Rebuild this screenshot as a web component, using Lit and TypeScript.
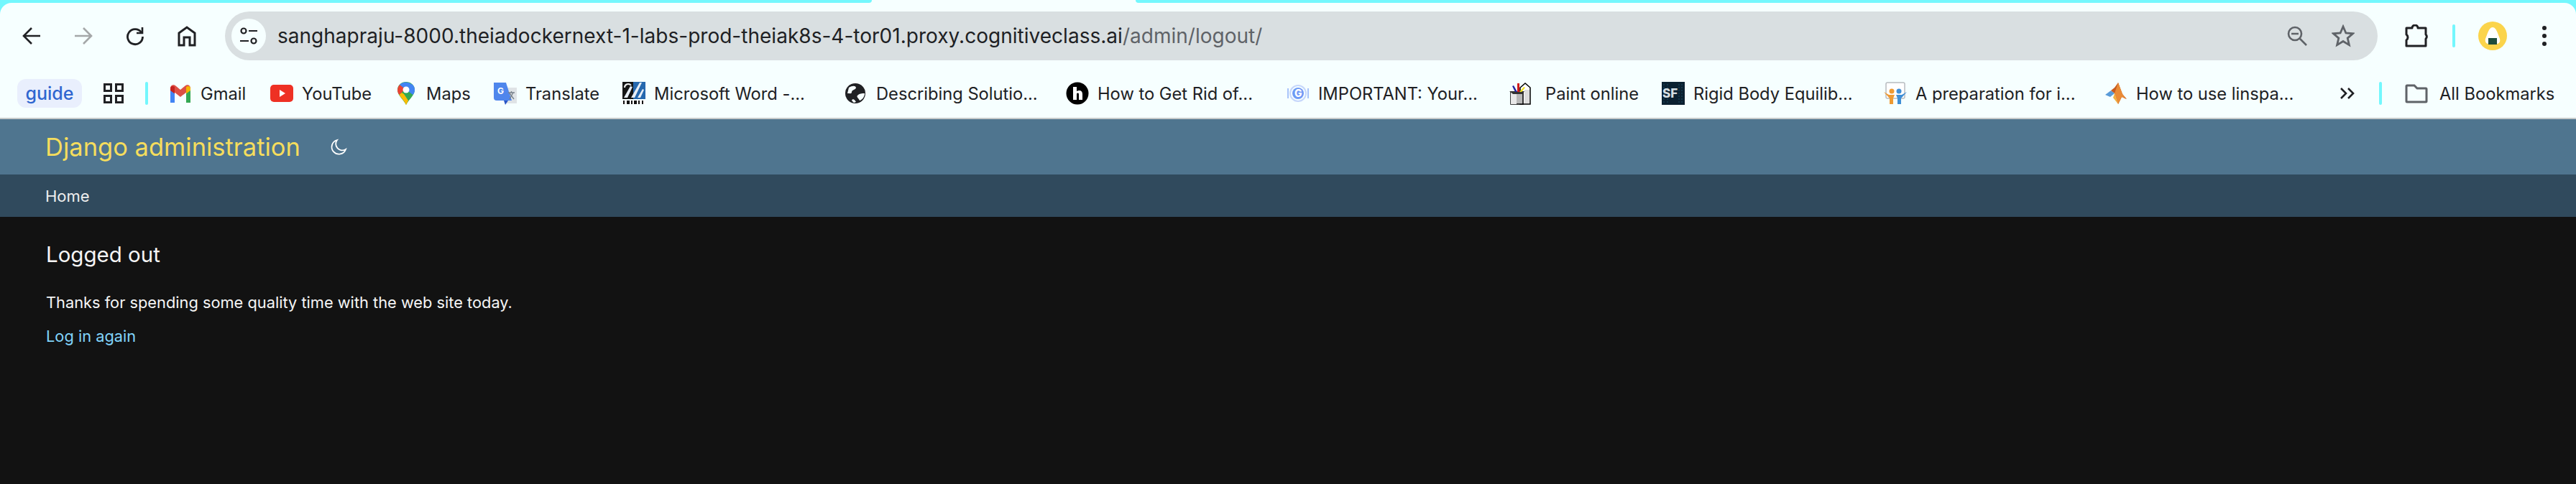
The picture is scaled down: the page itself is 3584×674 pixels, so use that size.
import { LitElement, html, css, svg } from 'lit';
import { customElement } from 'lit/decorators.js';

// favicons, all drawn on a 32x32 box
const icons: Record<string, unknown> = {
  gmail: svg`<path d="M2 10v19h6V15z" fill="#4285f4"/><path d="M24 15v14h6V10z" fill="#34a853"/><path d="M2 10l14 11 14-11v-1c0-5-5-6-8-3l-6 5-6-5C7 3 2 4 2 9z" fill="#dd5044"/><path d="M2 9v3l6 4.500V7C5 5 2 6 2 9z" fill="#c5221f"/><path d="M24 7v9.500l6-4.500V9c0-3-3-4-6-2z" fill="#f4b400"/>`,
  youtube: svg`<rect x="0" y="4" width="32" height="24" rx="5" fill="#ee3124"/><path d="M13 11l8 5-8 5z" fill="#fff"/>`,
  maps: svg`<path d="M16 32C12 24 4 19 4 11a12 11 0 0 1 24 0c0 8-8 13-12 21z" fill="#34a853"/><path d="M7 4a12 11 0 0 0-3 7c0 3 1 5 2.500 7L16 9z" fill="#ea4335"/><path d="M7 4a12 11 0 0 1 17-.5L16 11z" fill="#4285f4"/><path d="M24 3a12 11 0 0 1 4 8c0 3-1 5-2.500 7L16 11z" fill="#4285f4"/><path d="M6.500 18c3 5 7 8 9.500 14l3-6-6-9-3-2z" fill="#fbbc04"/><circle cx="16" cy="11" r="4.500" fill="#fff"/>`,
  translate: svg`<path d="M13 8h19v22H16z" fill="#dfe3e6"/><path d="M0 1h17l8 25H4a4 4 0 0 1-4-4z" fill="#4f86ec"/><path d="M14 26h6l-4 6z" fill="#2a56c6"/><text x="5" y="17" font-size="12" font-weight="700" fill="#fff" font-family="Inter,sans-serif">G</text><path d="M20 15h9M24.500 13v2M22 24l5-9M22 16l6 8" stroke="#77808a" stroke-width="1.300" fill="none"/>`,
  word: svg`<rect x="0" y="0" width="32" height="24" fill="#2668ae"/><path d="M0 0h15v24H0z" fill="#151515"/><path d="M2 22l9-16 3 1-7 15zM12 22L24 1h3L17 22zM21 22l7-12 2 1-5 11z" fill="#e8eef5"/><path d="M3 8a5 5 0 0 1 9-3" stroke="#eee" stroke-width="2" fill="none"/><rect x="0" y="26" width="32" height="5" fill="#fff"/><path d="M1 26h2v5H1zM6 26h4v5H6zM12 26h2v5h-2zM16 26h4v5h-4zM22 26h2v5h-2zM27 26h2v5h-2z" fill="#111"/>`,
  globe: svg`<circle cx="15" cy="16" r="14" fill="#202124"/><path d="M6 8c5-3 9-3 10 0-1 4-5 2-6 6 0 3-2 2-6 2zM18 19c3-3 6-3 10-3 0 4-3 9-7 10-1-3-5-5-3-7zM10 26c1-3 4-2 6 2l-3 1z" fill="#f6ffff"/>`,
  hand: svg`<circle cx="16" cy="16" r="15.500" fill="#000"/><path d="M10 7h5v6c4-2 8-1 8 4v8h-5v-8c0-2-3-2-3 0v8h-5z" fill="#fff"/>`,
  coursera: svg`<circle cx="16" cy="16" r="11" fill="none" stroke="#c6d7fb" stroke-width="2"/><circle cx="16" cy="16" r="8" fill="#6f9af5"/><text x="11" y="21" font-size="14" font-weight="800" fill="#fff" font-family="Inter,sans-serif">G</text><path d="M2 9v14M30 9v14" stroke="#a8c4fa" stroke-width="2"/>`,
  paint: svg`<path d="M17 8l7-6 7 6v23H17z" fill="#fff" stroke="#000" stroke-width="1.500"/><path d="M23 11h7v19h-7z" fill="#ddd"/><path d="M4 14h17v17H4z" fill="#b8b8b8" stroke="#000" stroke-width="1.500"/><path d="M4 14h8v17H4z" fill="#e8e8e8"/><path d="M2 13l5 4h13l3-4z" fill="#333"/><path d="M10 14l-4-8 2-1 5 9z" fill="#23239e"/><path d="M13 14V2h3v12z" fill="#d01818"/><path d="M16 14l6-7 2 1-5 6z" fill="#f2e21c"/>`,
  sf: svg`<rect width="32" height="32" fill="#0b2030"/><path d="M3 3v26M8 3v26M24 3v26M28 3v26" stroke="#1c4a63" stroke-dasharray="2 2"/><text x="1" y="22" font-size="17" font-weight="800" fill="#d5dde2" font-family="Inter,sans-serif">SF</text>`,
  slides: svg`<rect x="3" y="1" width="26" height="22" rx="2" fill="#fff" stroke="#b8bcc0" stroke-width="1.500"/><circle cx="11" cy="13" r="3.500" fill="#ee9a32"/><circle cx="21" cy="13" r="3.500" fill="#3f8fd6"/><path d="M0 14l7 4h8l-2 5v8H8v-8z" fill="#ee9a32"/><path d="M32 14l-7 4h-8l2 5v8h5v-8z" fill="#3f8fd6"/>`,
  matlab: svg`<path d="M1 18l8-6 5 4-6 5z" fill="#5a9bd8"/><path d="M9 12l5-4L19 1l6 16 6 7-7-3-5 10-5-15z" fill="#c65a1e"/><path d="M19 1l-5 15 5 15 5-10 6 3-5-7z" fill="#e98b36"/><path d="M14 16l5 15-7-9z" fill="#f0b040"/>`,
  folder: svg`<path d="M2 27V6a1 1 0 0 1 1-1h10l4 4h12a1 1 0 0 1 1 1v17a1 1 0 0 1-1 1H3a1 1 0 0 1-1-1z" fill="none" stroke="#5f6368" stroke-width="3"/>`,
};

const bookmarks = [
  { icon: 'gmail', label: 'Gmail', width: 141, gap: 12 },
  { icon: 'youtube', label: 'YouTube', width: 173, gap: 12 },
  { icon: 'maps', label: 'Maps', width: 138, gap: 12 },
  { icon: 'translate', label: 'Translate', width: 179, gap: 12 },
  { icon: 'word', label: 'Microsoft Word -...', width: 309, gap: 12 },
  { icon: 'globe', label: 'Describing Solutio...', width: 308, gap: 12 },
  { icon: 'hand', label: 'How to Get Rid of...', width: 307, gap: 12 },
  { icon: 'coursera', label: 'IMPORTANT: Your...', width: 308, gap: 12 },
  { icon: 'paint', label: 'Paint online', width: 214, gap: 20 },
  { icon: 'sf', label: 'Rigid Body Equilib...', width: 309, gap: 12 },
  { icon: 'slides', label: 'A preparation for i...', width: 307, gap: 12 },
  { icon: 'matlab', label: 'How to use linspa...', width: 327, gap: 12 },
];

@customElement('app-root')
export class AppRoot extends LitElement {
  static styles = css`
    :host {
      display: block;
      height: 674px;
      background: #121212;
      font-family: Inter, 'Liberation Sans', sans-serif;
      overflow: hidden;
    }

    /* Barra del navegador */
    .chrome {
      background: #73f7fd;
    }
    .strip {
      display: flex;
      height: 4px;
      background: #f6ffff;
    }
    .strip-left {
      width: 1213px;
      background: #73f7fd;
      border-bottom-right-radius: 4px;
    }
    .strip-gap {
      width: 367px;
    }
    .strip-right {
      flex: 1;
      background: #73f7fd;
      border-bottom-left-radius: 4px;
    }
    .toolbar {
      display: flex;
      align-items: center;
      height: 92px;
      padding: 0 0 0 8px;
      box-sizing: border-box;
      background: #f6ffff;
      border-radius: 16px 16px 0 0;
    }
    .nav {
      display: flex;
      justify-content: center;
      width: 72px;
      flex: none;
    }
    .nav svg {
      display: block;
    }
    .omnibox {
      display: flex;
      align-items: center;
      width: 2995px;
      height: 68px;
      margin: 0 0 0 17px;
      flex: none;
      box-sizing: border-box;
      padding: 0 32px 0 9px;
      background: #d9dfe1;
      border-radius: 34px;
    }
    .site {
      display: flex;
      align-items: center;
      justify-content: center;
      width: 48px;
      height: 48px;
      flex: none;
      background: #f6ffff;
      border-radius: 50%;
    }
    .url {
      margin-left: 16px;
      flex: 1;
      font-size: 28px;
      letter-spacing: 0.02px;
      color: #202124;
      white-space: nowrap;
    }
    .url span {
      color: #5f6368;
    }
    .omni-actions {
      display: flex;
      align-items: center;
      gap: 34px;
    }
    .actions {
      display: flex;
      align-items: center;
      flex: 1;
      padding-left: 38px;
    }
    .divider {
      width: 4px;
      border-radius: 2px;
      background: #73f7fd;
      flex: none;
    }
    .actions .divider {
      height: 32px;
      margin: 0 32px 0 34px;
    }
    .avatar {
      flex: none;
    }
    .dots {
      display: flex;
      flex-direction: column;
      gap: 5px;
      margin-left: 49px;
    }
    .dots i {
      width: 6px;
      height: 6px;
      border-radius: 50%;
      background: #202124;
    }

    /* Marcadores */
    .bookmarks {
      display: flex;
      align-items: center;
      height: 68px;
      padding-left: 24px;
      background: #f6ffff;
      border-bottom: 2px solid #c6caca;
      font-size: 23.700px;
      color: #202124;
    }
    .guide {
      width: 90px;
      height: 40px;
      flex: none;
      display: flex;
      align-items: center;
      justify-content: center;
      background: #e9effd;
      border-radius: 12px;
      color: #2f66d0;
      font-size: 25px;
      font-weight: 500;
    }
    .apps {
      margin-left: 30px;
      flex: none;
      display: block;
    }
    .bookmarks .divider {
      height: 32px;
      margin: 0 29px 0 30px;
    }
    .bm {
      display: flex;
      align-items: center;
      flex: none;
      white-space: nowrap;
    }
    .bm svg {
      flex: none;
      display: block;
    }
    .all {
      gap: 16px;
    }
    .more {
      display: block;
      flex: none;
    }
    .bookmarks .divider.second {
      margin: 0 32px 0 34px;
    }

    /* Django */
    .header {
      display: flex;
      align-items: center;
      height: 77px;
      padding: 0 63px;
      background: #4f758f;
    }
    .brand {
      color: #f5dd5d;
      font-size: 34.500px;
      font-weight: 400;
    }
    .moon {
      margin-left: 41px;
      display: block;
    }
    .crumbs {
      height: 59px;
      display: flex;
      align-items: center;
      padding: 0 63px;
      background: #304a5d;
      color: #eeeeee;
      font-size: 22px;
    }
    .content {
      padding: 32px 64px;
      color: #f5f5f5;
    }
    .content h1 {
      margin: 0;
      font-size: 29.500px;
      line-height: 40px;
      font-weight: 400;
      color: #f5f5f5;
    }
    .content p {
      margin: 34px 0 0;
      font-size: 21.800px;
      line-height: 26px;
    }
    .content a {
      color: #81d4fa;
      text-decoration: none;
    }
    .content p + p {
      margin-top: 21px;
    }
  `;

  private _favicon(name: string) {
    return html`<svg width="32" height="32" viewBox="0 0 32 32">${icons[name]}</svg>`;
  }

  render() {
    return html`
      <div class="chrome">
        <div class="strip">
          <div class="strip-left"></div>
          <div class="strip-gap"></div>
          <div class="strip-right"></div>
        </div>
        <div class="toolbar">
          <div class="nav">
            <svg width="28" height="28" viewBox="0 0 28 28" fill="none" stroke="#202124" stroke-width="2.600">
              <path d="M26 14H4M14 3L3 14l11 11"/>
            </svg>
          </div>
          <div class="nav">
            <svg width="28" height="28" viewBox="0 0 28 28" fill="none" stroke="#a4a7a8" stroke-width="2.600">
              <path d="M2 14h22M14 3l11 11-11 11"/>
            </svg>
          </div>
          <div class="nav">
            <svg width="28" height="28" viewBox="0 0 28 28" fill="none" stroke="#202124" stroke-width="2.800">
              <path d="M22.500 9A10.500 10.500 0 1 0 24.500 15"/>
              <path d="M24 2v8h-8" stroke-width="2.600"/>
            </svg>
          </div>
          <div class="nav">
            <svg width="28" height="30" viewBox="0 0 28 30" fill="none" stroke="#202124" stroke-width="3">
              <path d="M3 28V11L14 3l11 8v17h-7V17h-8v11z"/>
            </svg>
          </div>
          <div class="omnibox">
            <div class="site">
              <svg width="26" height="26" viewBox="0 0 26 26" fill="none" stroke="#202124" stroke-width="2.200">
                <circle cx="6" cy="6" r="3.500"/>
                <path d="M13 6h12M1 20h12"/>
                <circle cx="20" cy="20" r="3.500"/>
              </svg>
            </div>
            <div class="url">sanghapraju-8000.theiadockernext-1-labs-prod-theiak8s-4-tor01.proxy.cognitiveclass.ai<span>/admin/logout/</span></div>
            <div class="omni-actions">
              <svg width="28" height="28" viewBox="0 0 28 28" fill="none" stroke="#5f6368" stroke-width="2.600">
                <circle cx="11" cy="11" r="9"/>
                <path d="M6 11h10M17.500 17.500L27 27"/>
              </svg>
              <svg width="32" height="32" viewBox="0 0 32 32" fill="none" stroke="#5f6368" stroke-width="2.800">
                <path d="M16 3l3.900 9 9.600.800-7.300 6.300 2.200 9.500L16 23.500l-8.400 5.100 2.200-9.500-7.300-6.300 9.600-.800z"/>
              </svg>
            </div>
          </div>
          <div class="actions">
            <svg width="32" height="32" viewBox="0 0 32 32" fill="none" stroke="#202124" stroke-width="3">
              <path d="M2 5h8a4 4 0 0 1 8 0h11v9a4 4 0 0 1 0 6v10H2v-8a5 5 0 0 0 0-8z" stroke-linejoin="round"/>
            </svg>
            <div class="divider"></div>
            <svg class="avatar" width="40" height="40" viewBox="0 0 40 40">
              <circle cx="20" cy="20" r="20" fill="#fbd44b"/>
              <path d="M20 8c3 0 5 3 7 8l3 8c1 4-1 7-4 7H14c-3 0-5-3-4-7l3-8c2-5 4-8 7-8z" fill="#fff"/>
              <rect x="14" y="23" width="12" height="9" fill="#1e4d3c"/>
            </svg>
            <div class="dots"><i></i><i></i><i></i></div>
          </div>
        </div>
        <div class="bookmarks">
          <div class="guide">guide</div>
          <svg class="apps" width="28" height="28" viewBox="0 0 28 28" fill="none" stroke="#202124" stroke-width="3">
            <rect x="1.500" y="1.500" width="9" height="9"/>
            <rect x="17.500" y="1.500" width="9" height="9"/>
            <rect x="1.500" y="17.500" width="9" height="9"/>
            <rect x="17.500" y="17.500" width="9" height="9"/>
          </svg>
          <div class="divider"></div>
          ${bookmarks.map(
            (b) => html`<div class="bm" style="width:${b.width}px;gap:${b.gap}px">${this._favicon(b.icon)}<span>${b.label}</span></div>`
          )}
          <svg class="more" width="21" height="18" viewBox="0 0 21 18" fill="none" stroke="#202124" stroke-width="2.600">
            <path d="M2 2l7 7-7 7M12 2l7 7-7 7"/>
          </svg>
          <div class="divider second"></div>
          <div class="bm all">${this._favicon('folder')}<span>All Bookmarks</span></div>
        </div>
      </div>

      <div class="header">
        <div class="brand">Django administration</div>
        <svg class="moon" width="24" height="24" viewBox="0 0 24 24" fill="none" stroke="#fff" stroke-width="1.800">
          <path d="M10 2a10 10 0 1 0 12 13 9 9 0 0 1-12-13z"/>
        </svg>
      </div>
      <div class="crumbs">Home</div>
      <div class="content">
        <h1>Logged out</h1>
        <p>Thanks for spending some quality time with the web site today.</p>
        <p><a href="#">Log in again</a></p>
      </div>
    `;
  }
}
